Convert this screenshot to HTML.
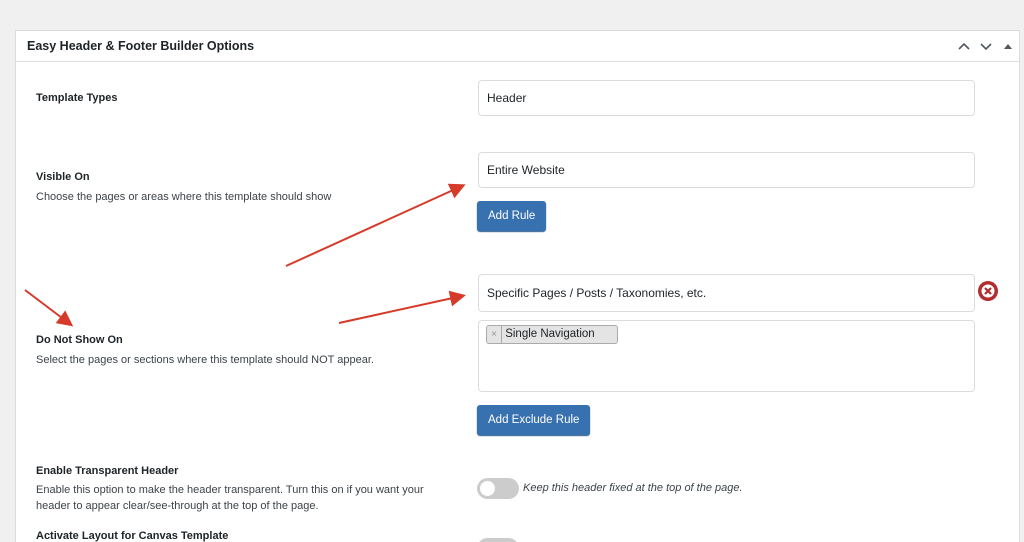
<!DOCTYPE html>
<html style="overflow:hidden;height:542px"><head><style>
body{margin:0;width:1024px;height:542px;background:#f0f0f1;font-family:"Liberation Sans",sans-serif;color:#1d2327;overflow:hidden;position:relative}
.panel{position:absolute;left:15px;top:30px;width:1003px;height:530px;background:#fff;border:1px solid #dcdcde}
.hd{height:30px;border-bottom:1px solid #dcdcde;font-size:12.5px;font-weight:bold;line-height:30px;padding-left:11px}
.a{position:absolute;font-size:11px}
.lbl{position:absolute;left:36px;font-size:11px;font-weight:bold}
.desc{position:absolute;left:36px;font-size:11px;color:#3c434a;line-height:16px}
.inp{position:absolute;left:478px;width:497px;height:34px;border:1px solid #dcdcde;border-radius:4px;box-sizing:border-box;font-size:12px;line-height:33px;padding-left:8px;background:#fff}
.btn{position:absolute;left:477px;height:30px;background:#3771b0;color:#fff;border-radius:3px;font-size:11.5px;line-height:31px;padding:0 11px;box-shadow:0 1px 1px #2a5a8e}
</style></head><body>
<div class="panel"><div class="hd">Easy Header &amp; Footer Builder Options</div></div>
<svg style="position:absolute;left:955px;top:38px" width="60" height="16"><path d="M4 11l5-5 5 5M26 6l5 5 5-5" stroke="#50575e" stroke-width="1.6" fill="none"/><path d="M49 11l4-5 4 5z" fill="#50575e"/></svg>
<div class="lbl" style="top:92px">Template Types</div>
<div class="inp" style="top:80px;height:36px;line-height:35px">Header</div>
<div class="lbl" style="top:171px">Visible On</div>
<div class="desc" style="top:189px">Choose the pages or areas where this template should show</div>
<div class="inp" style="top:152px;height:36px;line-height:35px">Entire Website</div>
<div class="btn" style="top:201px">Add Rule</div>
<div class="lbl" style="top:334px">Do Not Show On</div>
<div class="desc" style="top:352px">Select the pages or sections where this template should NOT appear.</div>
<div class="inp" style="top:274px;height:38px;line-height:37px">Specific Pages / Posts / Taxonomies, etc.</div>
<svg style="position:absolute;left:977px;top:280px" width="22" height="22"><circle cx="11" cy="11" r="10" fill="#b32d2e"/><circle cx="11" cy="11" r="6.5" fill="#fff"/><path d="M8 8l6 6M14 8l-6 6" stroke="#b32d2e" stroke-width="2.2"/></svg>
<div class="inp" style="top:320px;height:72px"></div>
<div style="position:absolute;left:486px;top:325px;width:130px;height:17px;border:1px solid #aaa;border-radius:3px;background:#e4e4e4;font-size:11.5px;line-height:17px"><span style="display:inline-block;width:14px;text-align:center;color:#999;border-right:1px solid #aaa;font-size:10px">×</span> Single Navigation</div>
<div class="btn" style="top:405px">Add Exclude Rule</div>
<div class="lbl" style="top:465px">Enable Transparent Header</div>
<div class="desc" style="top:482px">Enable this option to make the header transparent. Turn this on if you want your<br>header to appear clear/see-through at the top of the page.</div>
<div style="position:absolute;left:477px;top:478px;width:42px;height:21px;border-radius:11px;background:#ccc"><div style="position:absolute;left:3px;top:3px;width:15px;height:15px;border-radius:50%;background:#fff"></div></div>
<div class="a" style="left:523px;top:482px;font-style:italic;color:#3c434a">Keep this header fixed at the top of the page.</div>
<div class="lbl" style="top:530px">Activate Layout for Canvas Template</div>
<div style="position:absolute;left:477px;top:538px;width:42px;height:21px;border-radius:11px;background:#ccc"></div>
<svg style="position:absolute;left:0;top:0" width="1024" height="542"><defs><marker id="m" markerWidth="8" markerHeight="8" refX="6" refY="4" orient="auto"><path d="M0 0L8 4L0 8z" fill="#d63a2a"/></marker></defs>
<g stroke="#d63a2a" stroke-width="2" fill="none" marker-end="url(#m)"><path d="M286 266L462 186"/><path d="M339 323L462 296"/><path d="M25 290L70 324"/></g></svg>
</body></html>
